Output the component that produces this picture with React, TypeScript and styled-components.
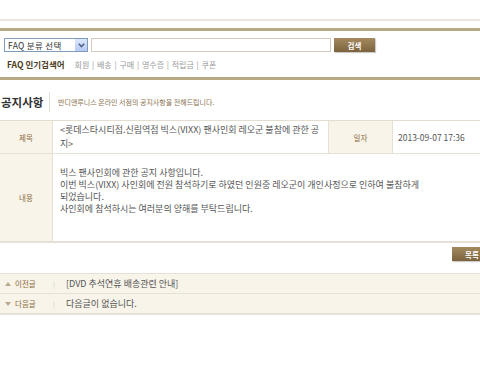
import React from "react";
import styled, { createGlobalStyle } from "styled-components";

const Global = createGlobalStyle`
  html, body { margin: 0; padding: 0; background: #fff; overflow: hidden; }
  body { font-family: "Noto Sans CJK KR", "Noto Sans", sans-serif; color: #555; }
`;

const Page = styled.div`
  width: 500px;
  padding-top: 19px;
`;

const ThinLine = styled.div`
  height: 2px;
  background: #ece8dd;
`;

const SearchBox = styled.div`
  margin-top: 7px;
  border-top: 3px solid #b8a985;
  border-bottom: 3px solid #b8a985;
  padding: 7px 0 0 4px;
  height: 39px;
  box-sizing: content-box;
`;

const SearchRow = styled.div`
  display: flex;
  align-items: center;
  gap: 3px;
  height: 14px;
`;

const Select = styled.div`
  width: 84px;
  height: 14px;
  box-sizing: border-box;
  border: 1px solid #7f9db9;
  display: flex;
  align-items: center;
  justify-content: space-between;
  font-size: 8.5px;
  color: #333;
  padding-left: 3px;
  letter-spacing: 0.3px;
`;

const SelectArrow = styled.div`
  width: 12px;
  height: 12px;
  background: linear-gradient(#dce7fd, #b7c9f3);
  display: flex;
  align-items: center;
  justify-content: center;
`;

const Input = styled.div`
  width: 240px;
  height: 14px;
  box-sizing: border-box;
  border: 1px solid #d2cbbd;
`;

const BrownButton = styled.div<{ $w: number }>`
  width: ${(p) => p.$w}px;
  height: 14px;
  background: linear-gradient(#a48a5e, #7b633d);
  color: #fff;
  font-size: 7.5px;
  font-weight: 700;
  display: flex;
  align-items: center;
  justify-content: center;
  box-shadow: 1px 1px 1px rgba(0,0,0,0.2);
`;

const Popular = styled.div`
  display: flex;
  align-items: center;
  margin-top: 5px;
  padding-left: 3px;
  height: 14px;
`;

const PopTitle = styled.span`
  font-size: 8.5px;
  font-weight: 700;
  color: #4a3d1c;
  margin-right: 10px;
`;

const PopLinks = styled.span`
  font-size: 8px;
  color: #9a9a9a;
  word-spacing: 1px;
`;

const Heading = styled.div`
  display: flex;
  align-items: center;
  height: 20px;
  margin-top: 12px;
`;

const HTitle = styled.div`
  font-size: 11.5px;
  font-weight: 700;
  color: #333;
  padding-left: 1px;
  width: 48px;
  border-right: 1px solid #e4e0d6;
  line-height: 20px;
`;

const HDesc = styled.div`
  font-size: 7px;
  color: #8a7250;
  padding-left: 8px;
`;

const Table = styled.div`
  margin-top: 8px;
  border-top: 1px solid #e3ddd0;
  border-bottom: 2px solid #e6e1d6;
  display: grid;
  grid-template-columns: 53px 276px 64px 1fr;
`;

const Label = styled.div<{ $h: number; $bt?: boolean }>`
  background: #f8f4ea;
  height: ${(p) => p.$h}px;
  display: flex;
  align-items: center;
  justify-content: center;
  font-size: 7.5px;
  color: #8a6a3c;
  border-right: 1px solid #e6e1d6;
  border-top: ${(p) => (p.$bt ? "1px solid #e6e1d6" : "none")};
`;

const Cell = styled.div<{ $bt?: boolean; $span?: number; $pad?: number }>`
  grid-column: span ${(p) => p.$span || 1};
  font-size: 8.5px;
  color: #555;
  padding-left: ${(p) => p.$pad ?? 7}px;
  display: flex;
  align-items: center;
  border-right: 1px solid #e6e1d6;
  border-top: ${(p) => (p.$bt ? "1px solid #e6e1d6" : "none")};
`;

const TitleText = styled.div`
  font-size: 9px;
  line-height: 14px;
  color: #555;
  padding-right: 4px;
`;

const Content = styled.div`
  align-self: flex-start;
  font-size: 9px;
  line-height: 12px;
  color: #555;
  padding-top: 13px;
`;

const ListRow = styled.div`
  display: flex;
  justify-content: flex-end;
  padding: 4px 8px 0 0;
  height: 24px;
  box-sizing: content-box;
`;

const NavBox = styled.div`
  margin-top: 2px;
  border-top: 1px solid #e6e1d6;
  border-bottom: 2px solid #e6e1d6;
  background: #f8f4ea;
`;

const NavRow = styled.div<{ $bt?: boolean }>`
  display: flex;
  align-items: center;
  height: 19px;
  border-top: ${(p) => (p.$bt ? "1px solid #e6e1d6" : "none")};
`;

const NavLabel = styled.div`
  width: 53px;
  padding-left: 5px;
  box-sizing: border-box;
  color: #8a6a3c;
  display: flex;
  align-items: center;
  gap: 4px;
  font-size: 7.5px;
`;

const NavSep = styled.span`
  color: #ccc;
  font-size: 7px;
  width: 13px;
`;

const NavText = styled.span`
  color: #555;
  font-size: 9px;
`;

const Tri = ({ up }: { up?: boolean }) => (
  <svg width="6" height="4" viewBox="0 0 6 4">
    <path d={up ? "M0 4 L3 0 L6 4 Z" : "M0 0 L3 4 L6 0 Z"} fill="#b7a98a" />
  </svg>
);

export default function App() {
  return (
    <>
      <Global />
      <Page>
        <ThinLine />
        <SearchBox>
          <SearchRow>
            <Select>
              <span>FAQ 분류 선택</span>
              <SelectArrow>
                <svg width="7" height="5" viewBox="0 0 7 5">
                  <path d="M0.8 0.8 L3.5 3.6 L6.2 0.8" stroke="#4d6185" strokeWidth="1.5" fill="none" />
                </svg>
              </SelectArrow>
            </Select>
            <Input />
            <BrownButton $w={41}>검색</BrownButton>
          </SearchRow>
          <Popular>
            <PopTitle>FAQ 인기검색어</PopTitle>
            <PopLinks>회원 | 배송 | 구매 | 영수증 | 적립금 | 쿠폰</PopLinks>
          </Popular>
        </SearchBox>
        <Heading>
          <HTitle>공지사항</HTitle>
          <HDesc>반디앤루니스 온라인 서점의 공지사항을 전해드립니다.</HDesc>
        </Heading>
        <Table>
          <Label $h={32}>제목</Label>
          <Cell>
            <TitleText>&lt;롯데스타시티점.신림역점 빅스(VIXX) 팬사인회 레오군 불참에 관한 공지&gt;</TitleText>
          </Cell>
          <Label $h={32}>일자</Label>
          <Cell $pad={5}>2013-09-07 17:36</Cell>
          <Label $h={87} $bt>내용</Label>
          <Cell $bt $span={3}>
            <Content>
              빅스 팬사인회에 관한 공지 사항입니다.
              <br />
              이번 빅스(VIXX) 사인회에 전원 참석하기로 하였던 인원중 레오군이 개인사정으로 인하여 불참하게
              <br />
              되었습니다.
              <br />
              사인회에 참석하시는 여러분의 양해를 부탁드립니다.
            </Content>
          </Cell>
        </Table>
        <ListRow>
          <BrownButton $w={40}>목록</BrownButton>
        </ListRow>
        <NavBox>
          <NavRow>
            <NavLabel><Tri up />이전글</NavLabel>
            <NavSep>|</NavSep>
            <NavText>[DVD 추석연휴 배송관련 안내]</NavText>
          </NavRow>
          <NavRow $bt>
            <NavLabel><Tri />다음글</NavLabel>
            <NavSep>|</NavSep>
            <NavText>다음글이 없습니다.</NavText>
          </NavRow>
        </NavBox>
      </Page>
    </>
  );
}
